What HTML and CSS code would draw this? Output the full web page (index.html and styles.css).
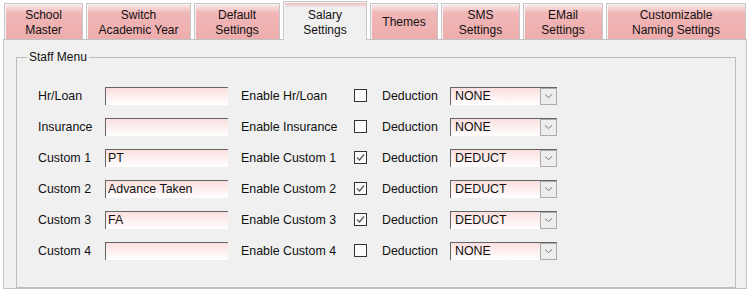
FILE: index.html
```html
<!DOCTYPE html>
<html lang="en">
<head>
    <meta charset="UTF-8">
    <title>Salary Settings</title>
    <link rel="stylesheet" href="styles.css">
</head>
<body>

    <!-- Tab strip -->
    <div class="tabs">
        <div class="tab tab-school">School<br>Master</div>
        <div class="tab tab-switch">Switch<br>Academic Year</div>
        <div class="tab tab-default">Default<br>Settings</div>
        <div class="tab tab-salary selected">Salary<br>Settings</div>
        <div class="tab tab-themes">Themes</div>
        <div class="tab tab-sms">SMS<br>Settings</div>
        <div class="tab tab-email">EMail<br>Settings</div>
        <div class="tab tab-naming">Customizable<br>Naming Settings</div>
    </div>

    <!-- Salary settings panel -->
    <div class="panel">
        <fieldset class="staff-menu">
            <legend>Staff Menu</legend>

            <div class="rows">
                <span class="label">Hr/Loan</span>
                <input class="field" type="text" value="">
                <span class="label enable">Enable Hr/Loan</span>
                <span class="check"></span>
                <span class="label">Deduction</span>
                <div class="combo"><span class="combo-value">NONE</span><span class="combo-arrow"><svg width="9" height="6" viewBox="0 0 9 6"><path d="M1 1.5 L4.5 4.5 L8 1.5" fill="none" stroke="#7a7a7a" stroke-width="1"/></svg></span></div>

                <span class="label">Insurance</span>
                <input class="field" type="text" value="">
                <span class="label enable">Enable Insurance</span>
                <span class="check"></span>
                <span class="label">Deduction</span>
                <div class="combo"><span class="combo-value">NONE</span><span class="combo-arrow"><svg width="9" height="6" viewBox="0 0 9 6"><path d="M1 1.5 L4.5 4.5 L8 1.5" fill="none" stroke="#7a7a7a" stroke-width="1"/></svg></span></div>

                <span class="label">Custom 1</span>
                <input class="field" type="text" value="PT">
                <span class="label enable">Enable Custom 1</span>
                <span class="check"><svg width="11" height="11" viewBox="0 0 11 11"><path d="M2 5.5 L4.5 8 L9 2.5" fill="none" stroke="#555" stroke-width="1.2"/></svg></span>
                <span class="label">Deduction</span>
                <div class="combo"><span class="combo-value">DEDUCT</span><span class="combo-arrow"><svg width="9" height="6" viewBox="0 0 9 6"><path d="M1 1.5 L4.5 4.5 L8 1.5" fill="none" stroke="#7a7a7a" stroke-width="1"/></svg></span></div>

                <span class="label">Custom 2</span>
                <input class="field" type="text" value="Advance Taken">
                <span class="label enable">Enable Custom 2</span>
                <span class="check"><svg width="11" height="11" viewBox="0 0 11 11"><path d="M2 5.5 L4.5 8 L9 2.5" fill="none" stroke="#555" stroke-width="1.2"/></svg></span>
                <span class="label">Deduction</span>
                <div class="combo"><span class="combo-value">DEDUCT</span><span class="combo-arrow"><svg width="9" height="6" viewBox="0 0 9 6"><path d="M1 1.5 L4.5 4.5 L8 1.5" fill="none" stroke="#7a7a7a" stroke-width="1"/></svg></span></div>

                <span class="label">Custom 3</span>
                <input class="field" type="text" value="FA">
                <span class="label enable">Enable Custom 3</span>
                <span class="check"><svg width="11" height="11" viewBox="0 0 11 11"><path d="M2 5.5 L4.5 8 L9 2.5" fill="none" stroke="#555" stroke-width="1.2"/></svg></span>
                <span class="label">Deduction</span>
                <div class="combo"><span class="combo-value">DEDUCT</span><span class="combo-arrow"><svg width="9" height="6" viewBox="0 0 9 6"><path d="M1 1.5 L4.5 4.5 L8 1.5" fill="none" stroke="#7a7a7a" stroke-width="1"/></svg></span></div>

                <span class="label">Custom 4</span>
                <input class="field" type="text" value="">
                <span class="label enable">Enable Custom 4</span>
                <span class="check"></span>
                <span class="label">Deduction</span>
                <div class="combo"><span class="combo-value">NONE</span><span class="combo-arrow"><svg width="9" height="6" viewBox="0 0 9 6"><path d="M1 1.5 L4.5 4.5 L8 1.5" fill="none" stroke="#7a7a7a" stroke-width="1"/></svg></span></div>
            </div>
        </fieldset>
    </div>

</body>
</html>
```

FILE: styles.css
```css
/* General Body Styling */
body {
    font-family: "Liberation Sans", Arial, sans-serif;
    font-size: 12.4px;
    color: #111;
    background-color: #ffffff;
    margin: 0;
    padding: 0;
}

/* Tab Strip */
.tabs {
    display: flex;
    align-items: flex-end;
    gap: 3px;
    height: 39px;
    padding-left: 4px;
}

.tab {
    box-sizing: border-box;
    height: 36px;
    padding-top: 4px;
    line-height: 15px;
    font-size: 12px;
    text-align: center;
    border: 1px solid #c6c6c6;
    border-bottom: none;
    box-shadow: inset 1px 1px 0 #f4f4f4;
    background: linear-gradient(#fbeeee 0, #f1b6b6 9px, #eeadad 100%);
}

.tab-themes {
    padding-top: 11px;
}

.tab.selected {
    position: relative;
    z-index: 1;
    height: 39px;
    margin-bottom: -1px;
    padding-top: 6px;
    background: linear-gradient(#f0b4b4 0, #f0f0f0 6px, #f0f0f0 100%);
}

.tab-school { width: 79px; }
.tab-switch { width: 105px; }
.tab-default { width: 86px; }
.tab-salary { width: 84px; }
.tab-themes { width: 68px; }
.tab-sms { width: 79px; }
.tab-email { width: 80px; }
.tab-naming { width: 140px; }

/* Panel */
.panel {
    box-sizing: border-box;
    width: 744px;
    height: 250px;
    margin-left: 3px;
    padding-top: 10px;
    padding-left: 12px;
    background-color: #f0f0f0;
    border: 1px solid #c2c2c2;
}

/* Staff Menu group */
.staff-menu {
    box-sizing: border-box;
    width: 720px;
    margin: 0;
    padding: 0 0 21px 0;
    border: 1px solid #bdbdbd;
}

.staff-menu legend {
    margin-left: 10px;
    padding: 0 2px;
    font-size: 12px;
    line-height: 14px;
}

.rows {
    display: grid;
    grid-template-columns: 67px 123px 126px 28px 68px 107px;
    grid-auto-rows: 31px;
    align-items: center;
    margin-top: 16px;
    padding-left: 21px;
}

.label {
    white-space: nowrap;
}

.enable {
    padding-left: 13px;
}

/* Text fields */
.field {
    box-sizing: border-box;
    width: 123px;
    height: 18px;
    margin: 0;
    padding: 0 0 0 2px;
    font: inherit;
    color: #111;
    border: none;
    border-top: 1px solid #646464;
    border-left: 1px solid #646464;
    background: linear-gradient(#fbdfdf, #ffffff);
    outline: none;
}

/* Check boxes */
.check {
    box-sizing: border-box;
    display: flex;
    align-items: center;
    justify-content: center;
    width: 13px;
    height: 13px;
    border: 1px solid #333;
    background-color: #fcfcfc;
}

/* Combo boxes */
.combo {
    box-sizing: border-box;
    display: flex;
    width: 107px;
    height: 18px;
    border-top: 1px solid #646464;
    border-left: 1px solid #646464;
    background: linear-gradient(#fbdfdf, #ffffff);
}

.combo-value {
    flex: 1;
    padding-left: 4px;
    line-height: 17px;
}

.combo-arrow {
    box-sizing: border-box;
    display: flex;
    align-items: center;
    justify-content: center;
    width: 17px;
    border: 1px solid #acacac;
    background-color: #ededed;
}
```
